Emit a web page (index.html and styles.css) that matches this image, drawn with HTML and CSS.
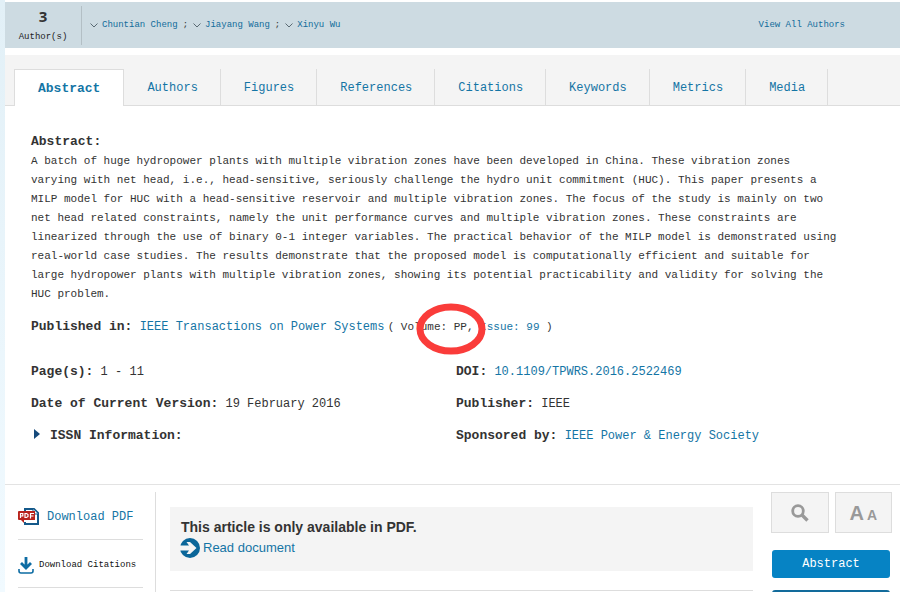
FILE: index.html
```html
<!DOCTYPE html>
<html lang="en">
<head>
<meta charset="utf-8">
<title>Article abstract</title>
<link rel="stylesheet" href="styles.css">
</head>
<body>
<div class="page">
  <header class="authors">
    <div class="count"><strong>3</strong><span>Author(s)</span></div>
    <div class="names">
      <svg class="chev" viewBox="0 0 8 5"><path d="M.5.5 4 4 7.500.5"/></svg><a href="#">Chuntian Cheng</a><span class="sep">;</span>
      <svg class="chev" viewBox="0 0 8 5"><path d="M.5.5 4 4 7.500.5"/></svg><a href="#">Jiayang Wang</a><span class="sep">;</span>
      <svg class="chev" viewBox="0 0 8 5"><path d="M.5.5 4 4 7.500.5"/></svg><a href="#">Xinyu Wu</a>
    </div>
    <a class="all" href="#">View All Authors</a>
  </header>

  <nav class="tabs">
    <a class="tab active" href="#">Abstract</a>
    <a class="tab" href="#">Authors</a>
    <a class="tab" href="#">Figures</a>
    <a class="tab" href="#">References</a>
    <a class="tab" href="#">Citations</a>
    <a class="tab" href="#">Keywords</a>
    <a class="tab" href="#">Metrics</a>
    <a class="tab" href="#">Media</a>
  </nav>

  <section class="article">
    <h2>Abstract:</h2>
    <p class="abstract">A batch of huge hydropower plants with multiple vibration zones have been developed in China. These vibration zones varying with net head, i.e., head-sensitive, seriously challenge the hydro unit commitment (HUC). This paper presents a MILP model for HUC with a head-sensitive reservoir and multiple vibration zones. The focus of the study is mainly on two net head related constraints, namely the unit performance curves and multiple vibration zones. These constraints are linearized through the use of binary 0-1 integer variables. The practical behavior of the MILP model is demonstrated using real-world case studies. The results demonstrate that the proposed model is computationally efficient and suitable for large hydropower plants with multiple vibration zones, showing its potential practicability and validity for solving the HUC problem.</p>
    <div class="published">
      <b>Published in:</b>
      <a href="#">IEEE Transactions on Power Systems</a>
      <span class="volume">( Volume: PP, <a href="#">Issue: 99</a> )</span>
      <svg class="ring" viewBox="0 0 70 52"><ellipse cx="35" cy="26" rx="31" ry="22"/></svg>
    </div>
    <div class="details">
      <div><b>Page(s):</b> 1 - 11</div>
      <div><b>DOI:</b> <a href="#">10.1109/TPWRS.2016.2522469</a></div>
      <div><b>Date of Current Version:</b> 19 February 2016</div>
      <div><b>Publisher:</b> IEEE</div>
      <div class="issn"><svg viewBox="0 0 6 10"><path d="M0 0 6 5 0 10z"/></svg><b>ISSN Information:</b></div>
      <div><b>Sponsored by:</b> <a href="#">IEEE Power &amp; Energy Society</a></div>
    </div>
  </section>

  <div class="lower">
    <aside class="downloads">
      <a class="pdf" href="#">
        <svg viewBox="0 0 22 18"><path d="M7 3V1h9l4 4v11H7v-2" fill="#fff" stroke="#14598a" stroke-width="2"/><path d="M15 1v5h5" fill="#fff" stroke="#14598a"/><path d="M1 3h16v9H6v3l-3-3H1q-1 0-1-1V4q0-1 1-1z" fill="#b8231c"/><path d="M2.500 10V5.500h2.300v2.500H2.500M7 5.500V9.500h1.500l1.500-1V6.500L8.500 5.500zM12.500 10.500v-5H16m-3 2.500h2.500" fill="none" stroke="#fff" stroke-width="1.200"/></svg>
        Download PDF
      </a>
      <a class="cite" href="#">
        <svg viewBox="0 0 16 17"><path d="M8 0v11M3 6l5 5 5-5" fill="none" stroke="#0d6ca3" stroke-width="2.800"/><path d="M1 12v2q0 2 2 2h10q2 0 2-2v-2" fill="none" stroke="#0d6ca3" stroke-width="1.600"/></svg>
        Download Citations
      </a>
    </aside>
    <main class="reader">
      <div class="notice">
        <strong>This article is only available in PDF.</strong>
        <a href="#">
          <svg viewBox="0 0 20 20"><circle cx="10" cy="10" r="10" fill="#0b6699"/><path d="M0 7.500h9L6.500 4H10l6.500 6-6.500 6H6.500L9 12.500H0z" fill="#f4f4f4"/></svg>
          Read document
        </a>
      </div>
    </main>
    <aside class="tools">
      <div class="toolrow">
        <button type="button" aria-label="Search"><svg width="18" height="18" viewBox="0 0 18 18"><circle cx="7" cy="7" r="5.300" fill="none" stroke="#999" stroke-width="2.800"/><path d="m11 11 5.500 5.500" stroke="#999" stroke-width="3.400"/></svg></button>
        <button class="size" type="button" aria-label="Text size"><span class="big">A</span><span class="small">A</span></button>
      </div>
      <button class="jump" type="button">Abstract</button>
      <div class="more"></div>
    </aside>
  </div>
</div>
</body>
</html>
```
FILE: styles.css
```css
* { box-sizing: border-box; }

body {
  margin: 0;
  height: 100vh;
  overflow: hidden;
  padding-left: 5px;
  background: linear-gradient(#e2f0f7, #f1faff);
  color: #333;
  font: 12px/19px "Liberation Mono", monospace;
}

a { color: #1475a5; text-decoration: none; }

button { font: inherit; padding: 0; cursor: pointer; }

.page {
  min-height: 100vh;
  padding-top: 2px;
  background: #fff;
}

.authors {
  display: flex;
  align-items: center;
  height: 46px;
  padding-right: 55px;
  background: #cddbe2;
  font-size: 9px;
}

.authors a { color: #126c9b; }

.count {
  display: flex;
  flex-direction: column;
  align-items: center;
  width: 77px;
  height: 39px;
  border-right: 1px solid #b3bfc5;
}

.count strong { font: bold 15px/21px "Open Sans", sans-serif; }
.count span { line-height: 20px; color: #222; }

.names {
  display: flex;
  align-items: center;
  flex: 1;
  padding-left: 8px;
}

.chev {
  width: 8px;
  height: 5px;
  margin-right: 4px;
  fill: none;
  stroke: #5a6a73;
}

.sep { margin: 0 5px; }

.tabs {
  display: flex;
  margin-top: 7px;
  padding: 14px 0 0 9px;
  background: #f4f4f4;
  box-shadow: inset 0 -1px #ddd;
}

.tab {
  height: 37px;
  padding: 0 22px 0 23px;
  border-right: 1px solid #ddd;
  line-height: 38px;
}

.tab.active {
  padding: 0 23px;
  border: 1px solid #ddd;
  border-bottom: 0;
  background: #fff;
  font-size: 13px;
  font-weight: bold;
}

.article { padding: 26px 19px 38px 26px; }

.article h2 { margin: 0; font-size: 13px; line-height: 20px; }

.article b { font-size: 13px; }

.abstract {
  max-width: 808px;
  margin: 0;
  font-size: 11px;
}

.published {
  position: relative;
  margin-top: 13px;
  white-space: nowrap;
}

.volume { margin-left: -4px; font-size: 11px; }

.ring {
  position: absolute;
  top: -14px;
  left: 385px;
  width: 70px;
  height: 52px;
  fill: none;
  stroke: #fa3c3a;
  stroke-width: 7px;
}

.details {
  display: grid;
  grid-template-columns: 1fr 1fr;
  gap: 12px 0;
  margin-top: 25px;
}

.issn svg {
  width: 6px;
  height: 10px;
  margin: 0 10px 0 3px;
  fill: #164a7b;
}

.lower {
  display: flex;
  align-items: flex-start;
  border-top: 1px solid #e3e3e3;
}

.downloads {
  width: 151px;
  height: 120px;
  margin-top: 7px;
  padding: 0 12px 0 13px;
  border-right: 1px solid #ddd;
}

.downloads a {
  display: flex;
  align-items: center;
  height: 48px;
  border-bottom: 1px solid #ddd;
  white-space: nowrap;
}

.downloads .pdf { padding-top: 3px; gap: 7px; }
.downloads .cite { padding-top: 3px; gap: 5px; color: #111; font-size: 9px; }
.pdf svg { width: 22px; height: 18px; }
.cite svg { width: 16px; height: 17px; }

.reader {
  flex: 1;
  margin: 22px 18px 0 14px;
  padding-bottom: 19px;
  border-bottom: 1px solid #ddd;
}

.notice {
  height: 64px;
  padding: 10px 11px;
  background: #f4f4f4;
  font: 13px/20px "Liberation Sans", sans-serif;
}

.notice strong { font-size: 14px; }

.notice a {
  display: flex;
  align-items: center;
  gap: 3px;
  margin-left: -1px;
}

.notice svg { width: 20px; height: 20px; }

.tools { width: 121px; margin: 7px 8px 0 0; }

.toolrow { display: flex; gap: 6px; }

.toolrow button {
  display: flex;
  flex: 1;
  align-items: center;
  justify-content: center;
  height: 41px;
  border: 1px solid #ddd;
  background: #f4f4f4;
}

.toolrow .size {
  align-items: baseline;
  gap: 3px;
  color: #999;
  font-family: "Liberation Sans", sans-serif;
  font-weight: bold;
  line-height: 41px;
}

.big { font-size: 20px; }
.small { font-size: 14px; }

.jump {
  display: block;
  width: calc(100% - 3px);
  height: 28px;
  margin: 17px 0 12px 1px;
  border: 0;
  border-radius: 3px;
  background: #0683c4;
  color: #fff;
}

.more {
  height: 28px;
  margin: 0 2px 0 1px;
  border-radius: 3px;
  background: #126b9b;
}
```
